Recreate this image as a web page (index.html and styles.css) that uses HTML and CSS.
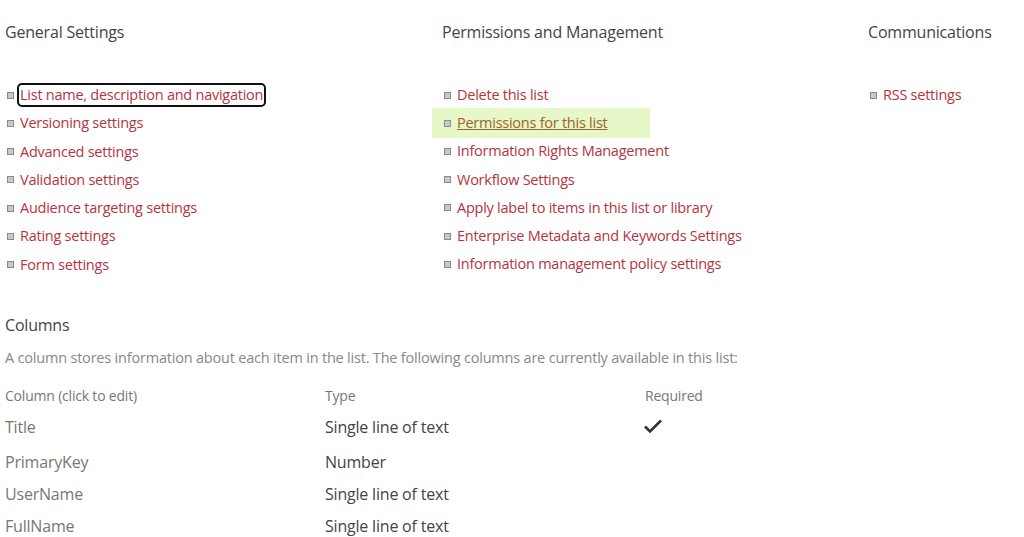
FILE: index.html
```html
<!DOCTYPE html>
<html>
<head>
<meta charset="utf-8">
<link rel="stylesheet" href="styles.css">
</head>
<body>
<div class="page">
  <div class="settings">
    <div class="group g1">
      <h2 class="heading">General Settings</h2>
      <ul class="links">
        <li><span class="bullet"></span><a class="link focused">List name, description and navigation</a></li>
        <li><span class="bullet"></span><a class="link">Versioning settings</a></li>
        <li><span class="bullet"></span><a class="link">Advanced settings</a></li>
        <li><span class="bullet"></span><a class="link">Validation settings</a></li>
        <li><span class="bullet"></span><a class="link">Audience targeting settings</a></li>
        <li><span class="bullet"></span><a class="link">Rating settings</a></li>
        <li><span class="bullet"></span><a class="link">Form settings</a></li>
      </ul>
    </div>
    <div class="group g2">
      <h2 class="heading">Permissions and Management</h2>
      <ul class="links">
        <li><span class="bullet"></span><a class="link">Delete this list</a></li>
        <li class="hl"><span class="bullet"></span><a class="link hover">Permissions for this list</a></li>
        <li><span class="bullet"></span><a class="link">Information Rights Management</a></li>
        <li><span class="bullet"></span><a class="link">Workflow Settings</a></li>
        <li><span class="bullet"></span><a class="link">Apply label to items in this list or library</a></li>
        <li><span class="bullet"></span><a class="link">Enterprise Metadata and Keywords Settings</a></li>
        <li><span class="bullet"></span><a class="link">Information management policy settings</a></li>
      </ul>
    </div>
    <div class="group g3">
      <h2 class="heading">Communications</h2>
      <ul class="links">
        <li><span class="bullet"></span><a class="link">RSS settings</a></li>
      </ul>
    </div>
  </div>

  <section class="columns">
    <h2 class="heading">Columns</h2>
    <p class="desc">A column stores information about each item in the list. The following columns are currently available in this list:</p>
    <div class="table">
      <div class="row head">
        <div class="c1">Column (click to edit)</div>
        <div class="c2">Type</div>
        <div class="c3">Required</div>
      </div>
      <div class="row r1">
        <div class="c1 name">Title</div>
        <div class="c2 type">Single line of text</div>
        <div class="c3"><svg class="check" width="20" height="16" viewBox="0 0 20 16"><path d="M2 8.5 L7 13.5 L18 2.5" fill="none" stroke="#333" stroke-width="2.6"/></svg></div>
      </div>
      <div class="row">
        <div class="c1 name">PrimaryKey</div>
        <div class="c2 type">Number</div>
        <div class="c3"></div>
      </div>
      <div class="row">
        <div class="c1 name">UserName</div>
        <div class="c2 type">Single line of text</div>
        <div class="c3"></div>
      </div>
      <div class="row">
        <div class="c1 name">FullName</div>
        <div class="c2 type">Single line of text</div>
        <div class="c3"></div>
      </div>
    </div>
  </section>
</div>
</body>
</html>
```

FILE: styles.css
```css
html, body {
  margin: 0;
  padding: 0;
  background: #fff;
}
body {
  font-family: "Segoe UI", "Open Sans", "Noto Sans", sans-serif;
  color: #444;
  overflow: hidden;
}
.page {
  padding: 0 0 0 5px;
}
.settings {
  display: grid;
  grid-template-columns: 437px 426px 1fr;
  padding-top: 20px;
}
.heading {
  margin: 0;
  font-size: 16px;
  font-weight: normal;
  color: #444;
  line-height: 24px;
  letter-spacing: -0.2px;
}
.links {
  list-style: none;
  margin: 37px 0 0 0;
  padding: 0;
}
.links li {
  display: flex;
  align-items: center;
  height: 28.25px;
}
.g2 .links li, .g3 .links li {
  margin-left: -10px;
  padding-left: 10px;
}
.bullet {
  width: 5px;
  height: 5px;
  border: 1px solid #8a8a8a;
  background: #c8c8c8;
  margin: 0 6px 0 2px;
  flex: none;
}
.link {
  color: #b5343f;
  font-size: 14.5px;
  line-height: 20px;
  letter-spacing: -0.25px;
  white-space: nowrap;
}
.focused {
  outline: 2px solid #111;
  outline-offset: 0;
  border-radius: 3px;
  padding: 0 1px;
  margin-left: -1px;
}
.hl {
  background: #e6f7c8;
  width: 208px;
  height: 30px !important;
  margin-top: -1px;
  margin-bottom: -1px;
}
.hover {
  color: #a3602d;
  text-decoration: underline;
}
.columns {
  margin-top: 34px;
}
.desc {
  margin: 11px 0 0 0;
  font-size: 14.5px;
  color: #888;
  line-height: 20px;
  letter-spacing: -0.2px;
  white-space: nowrap;
}
.table {
  margin-top: 18px;
}
.row {
  display: grid;
  grid-template-columns: 320px 320px 1fr;
  align-items: start;
  height: 32px;
  line-height: 30px;
}
.row.head {
  height: 20px;
  line-height: 20px;
  font-size: 14px;
  color: #777;
  margin-bottom: 6px;
  letter-spacing: -0.2px;
}
.row.r1 {
  height: 35px;
}
.name {
  font-size: 16px;
  color: #777;
  letter-spacing: -0.2px;
}
.type {
  font-size: 16px;
  color: #444;
  letter-spacing: -0.2px;
}
.c3 {
  display: flex;
}
.check {
  display: block;
  margin: 6px 0 0 -2px;
}
```
